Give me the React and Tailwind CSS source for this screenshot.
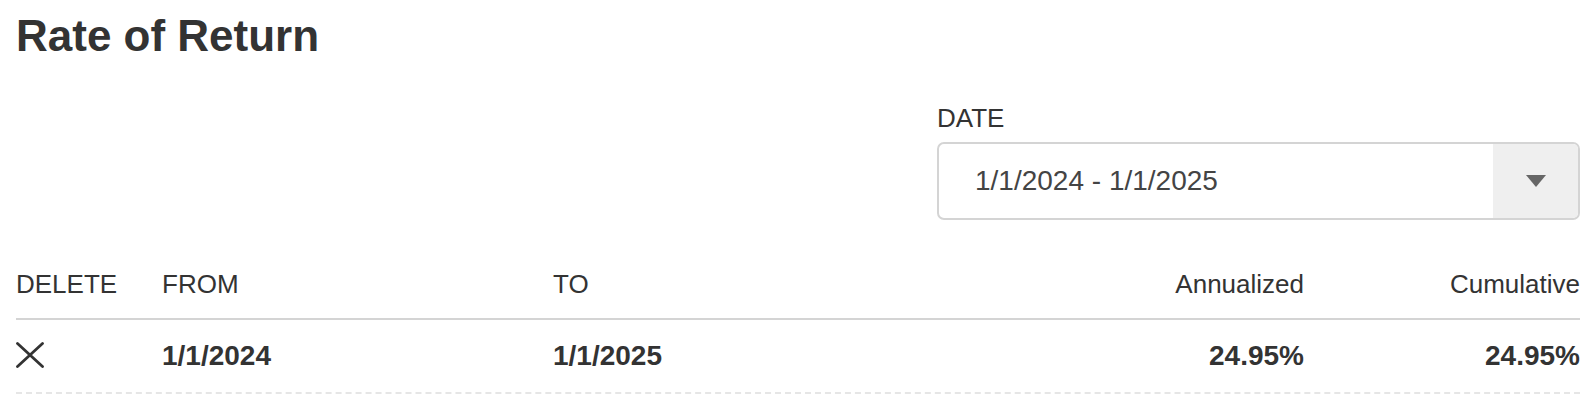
const rows = [
  { from: '1/1/2024', to: '1/1/2025', annualized: '24.95%', cumulative: '24.95%' },
];

const CloseIcon = () => (
  <svg width="28" height="26" viewBox="0 0 28 26" className="block -mt-[2px]">
    <path d="M1.5 1.5 L26.5 24.5 M26.5 1.5 L1.5 24.5" stroke="#333" strokeWidth="2.8" strokeLinecap="round" fill="none" />
  </svg>
);

const App = () => {
  return (
    <div className="min-h-screen bg-white px-4 text-[#333] font-['Liberation_Sans',Arial,sans-serif]">
      <h1 className="mt-[14px] text-[44px] leading-[44px] font-bold">Rate of Return</h1>

      {/* date filter */}
      <div className="flex justify-end mt-[45px]">
        <div className="w-[643px]">
          <div className="text-[26px] leading-[30px]">DATE</div>
          <div className="mt-[9px] h-[78px] flex border-2 border-[#d4d4d4] rounded-[7px] overflow-hidden">
            <div className="flex-1 flex items-center pl-[36px] text-[28px] leading-[28px] text-[#444]">
              1/1/2024 - 1/1/2025
            </div>
            <div className="w-[85px] bg-[#efefef] flex items-center justify-center">
              <svg width="20" height="12" viewBox="0 0 20 12">
                <path d="M0 0 H20 L10 12 Z" fill="#666" />
              </svg>
            </div>
          </div>
        </div>
      </div>

      {/* table */}
      <div className="mt-[49px] grid grid-cols-[146px_391px_1fr_200px_276px] text-[26px] leading-[30px] pb-[19px] border-b-2 border-[#d4d4d4]">
        <div>DELETE</div>
        <div>FROM</div>
        <div>TO</div>
        <div className="text-right">Annualized</div>
        <div className="text-right">Cumulative</div>
      </div>
      {rows.map((r, i) => (
        <div key={i} className="grid grid-cols-[146px_391px_1fr_200px_276px] items-center pt-[22px] pb-[22px] border-b-2 border-dashed border-[#e6e6e6] text-[28px] leading-[28px] font-bold">
          <div><CloseIcon /></div>
          <div>{r.from}</div>
          <div>{r.to}</div>
          <div className="text-right">{r.annualized}</div>
          <div className="text-right">{r.cumulative}</div>
        </div>
      ))}
    </div>
  );
};

export default App;
